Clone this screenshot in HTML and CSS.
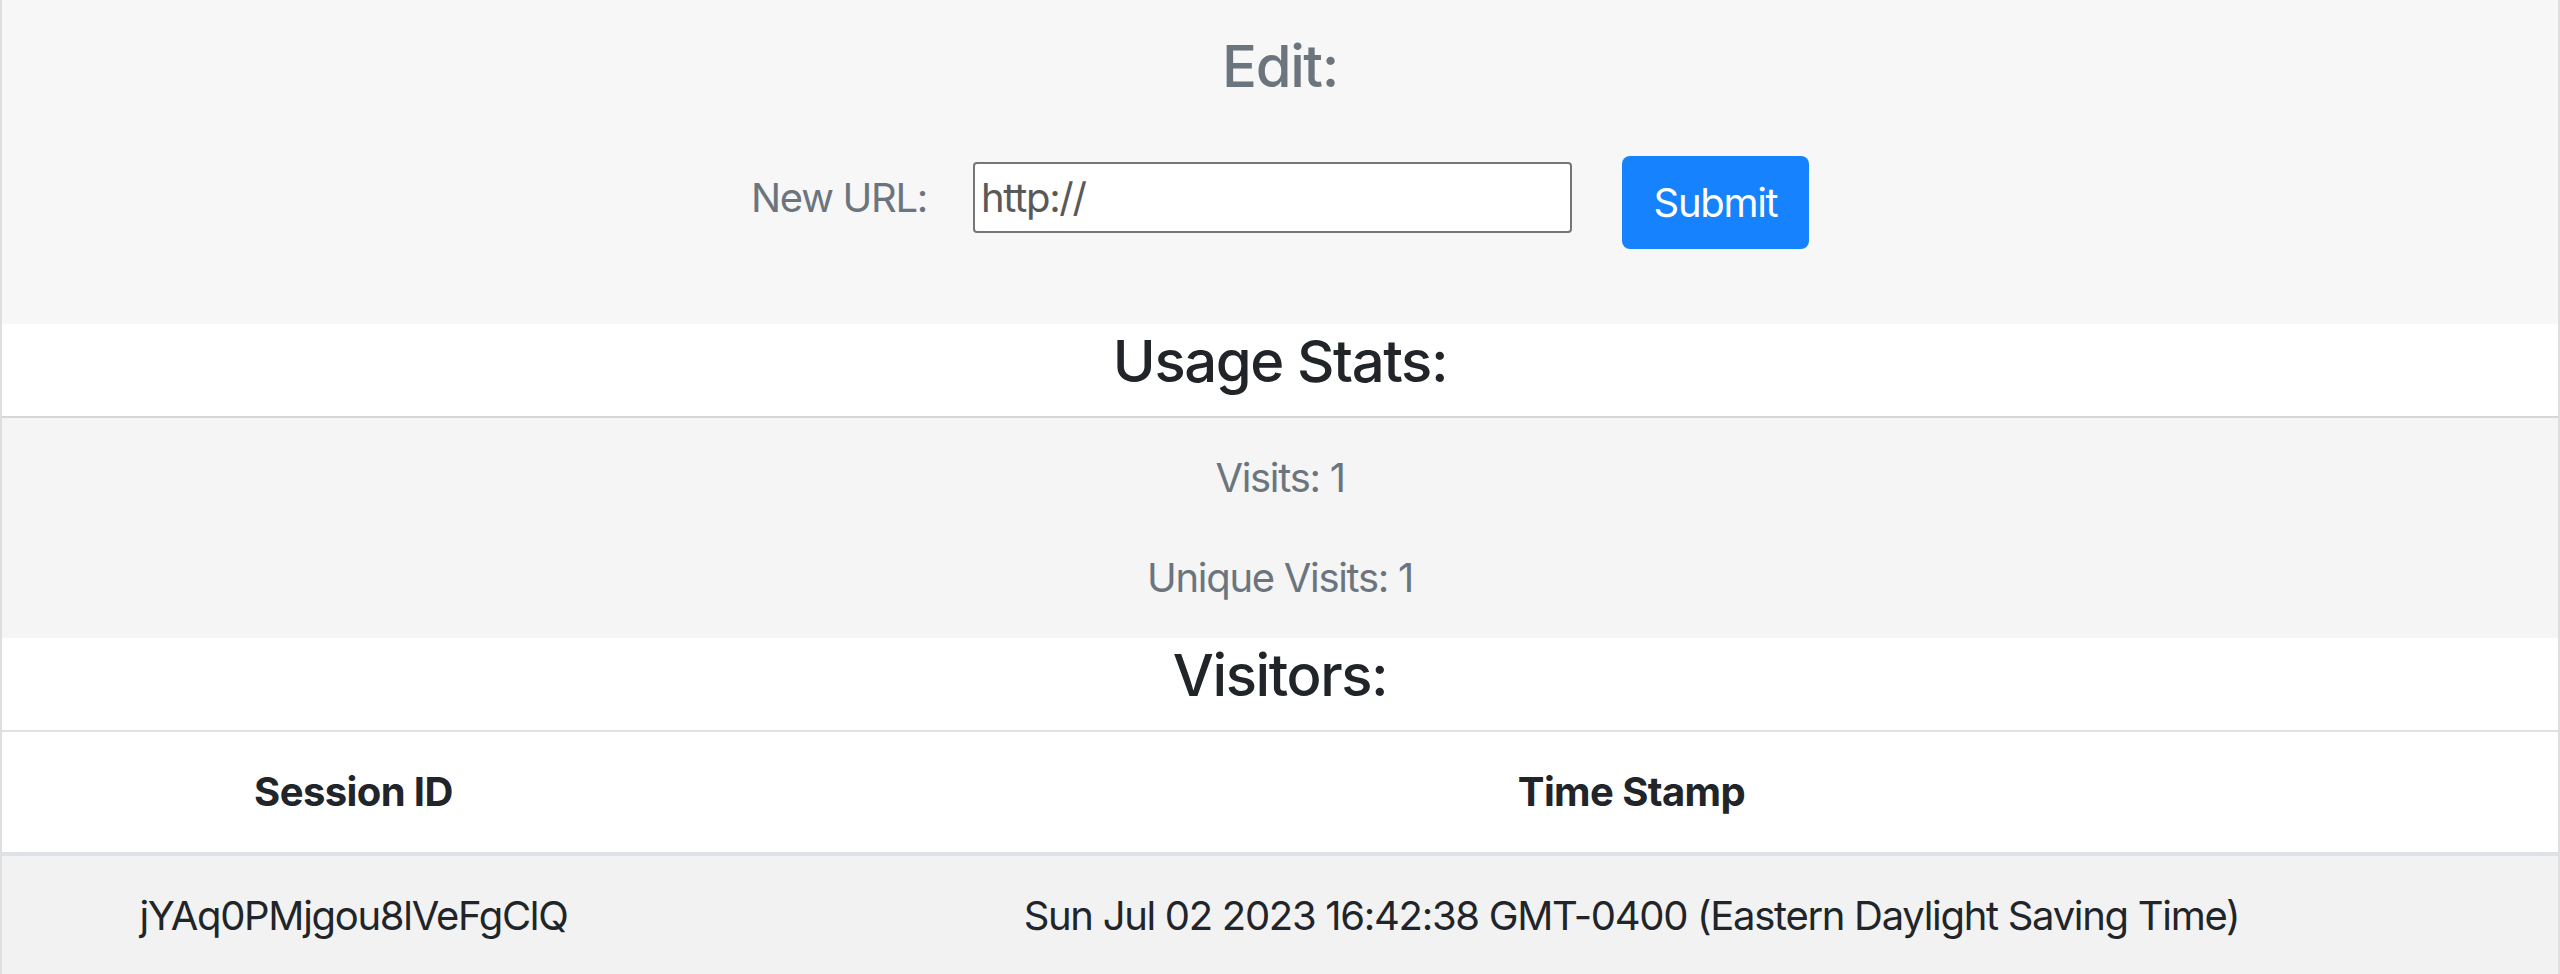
FILE: index.html
```html
<!DOCTYPE html>
<html lang="en">
<head>
<meta charset="utf-8">
<title>Link stats</title>
<link rel="stylesheet" href="styles.css">
</head>
<body>
<div class="page">
  <section class="edit">
    <h2 class="edit-title">Edit:</h2>
    <form class="url-form">
      <label class="url-label" for="url">New URL:</label>
      <input class="url-input" id="url" type="text" value="http://">
      <button class="btn-submit" type="button">Submit</button>
    </form>
  </section>
  <h2 class="band-title band-stats">Usage Stats:</h2>
  <section class="stats">
    <p class="stat">Visits: 1</p>
    <p class="stat">Unique Visits: 1</p>
  </section>
  <h2 class="band-title">Visitors:</h2>
  <table class="visitors">
    <colgroup><col class="col-id"><col class="col-time"></colgroup>
    <thead>
      <tr><th>Session ID</th><th>Time Stamp</th></tr>
    </thead>
    <tbody>
      <tr><td>jYAq0PMjgou8lVeFgClQ</td><td>Sun Jul 02 2023 16:42:38 GMT-0400 (Eastern Daylight Saving Time)</td></tr>
    </tbody>
  </table>
</div>
</body>
</html>
```

FILE: styles.css
```css
html, body {
  margin: 0;
  padding: 0;
  background: #ffffff;
}
body {
  font-family: Inter, "Noto Sans", "Liberation Sans", sans-serif;
  font-size: 40px;
  color: #212529;
  letter-spacing: -1.3px;
}
.page {
  border-left: 2px solid #dedede;
  border-right: 2px solid #dedede;
  min-height: 974px;
}
.edit {
  background: #f7f7f7;
  padding: 31px 0 75px;
}
.edit-title {
  margin: 0;
  text-align: center;
  font-size: 58px;
  line-height: 70px;
  font-weight: 500;
  letter-spacing: -1.4px;
  color: #6c757d;
}
.url-form {
  display: flex;
  align-items: flex-start;
  margin-top: 55px;
  padding-left: 749px;
}
.url-label {
  width: 222px;
  margin-top: 12px;
  font-size: 40px;
  line-height: 60px;
  letter-spacing: -1.3px;
  color: #6c757d;
}
.url-input {
  box-sizing: border-box;
  width: 599px;
  height: 71px;
  margin: 6px 0 0;
  padding: 0 6px;
  border: 2px solid #767676;
  border-radius: 4px;
  background: #ffffff;
  font-family: Inter, "Noto Sans", sans-serif;
  font-size: 40px;
  letter-spacing: -1.3px;
  color: #595959;
}
.btn-submit {
  box-sizing: border-box;
  width: 187px;
  height: 93px;
  margin-left: 50px;
  padding: 17px 0 16px;
  border: 0;
  border-radius: 8px;
  background: #1782fd;
  color: #ffffff;
  font-family: Inter, "Noto Sans", sans-serif;
  font-size: 40px;
  line-height: 60px;
  letter-spacing: -1.3px;
  text-align: center;
}
.band-title {
  margin: 0;
  padding: 2px 0 20px;
  text-align: center;
  font-size: 58px;
  line-height: 70px;
  font-weight: 500;
  letter-spacing: -1.4px;
  color: #212529;
  background: #ffffff;
}
.band-stats {
  border-bottom: 2px solid #d6d6d6;
}
.stats {
  background: #f5f5f5;
  padding: 30px 0;
  display: flex;
  flex-direction: column;
  gap: 40px;
}
.stat {
  margin: 0;
  text-align: center;
  font-size: 40px;
  line-height: 60px;
  letter-spacing: -1.3px;
  color: #6c757d;
}
.visitors {
  width: 100%;
  border-collapse: collapse;
  font-size: 40px;
  line-height: 60px;
}
.col-id { width: 27.5%; }
.col-time { width: 72.5%; }
.visitors th {
  padding: 30px 0;
  font-weight: 700;
  letter-spacing: -0.6px;
  text-align: center;
  color: #212529;
  border-top: 2px solid #dee2e6;
  border-bottom: 4px solid #dee2e6;
}
.visitors td {
  padding: 30px 0;
  text-align: center;
  letter-spacing: -1.3px;
  color: #212529;
  background: #f2f2f2;
}
```
